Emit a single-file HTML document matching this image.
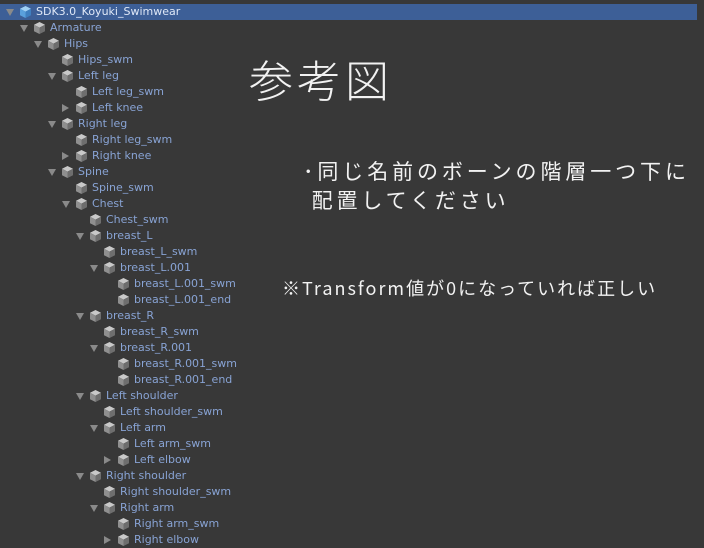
<!DOCTYPE html>
<html><head><meta charset="utf-8"><style>
body{margin:0;width:704px;height:545px;background:#383838;overflow:hidden;position:relative;font-family:"DejaVu Sans","Liberation Sans",sans-serif}
.r{position:absolute;left:0;width:697px;height:16px;font-size:11px;line-height:16px;color:#88a3d4;white-space:nowrap}
.sel{background:#3d5f97;color:#dfe8f7}
.a{position:absolute;top:4px;width:0;height:0}
.o{border-left:4px solid transparent;border-right:4px solid transparent;border-top:7px solid #8a8a8a;top:5px}
.c{border-top:4px solid transparent;border-bottom:4px solid transparent;border-left:7px solid #8a8a8a}
.cube{position:absolute;top:2px;width:11px;height:12px}
.t{position:absolute;top:0}
.j{position:absolute;color:#f2f2f2;font-family:"Noto Sans CJK JP","Liberation Sans",sans-serif;white-space:nowrap}
</style></head><body>
<div id="tree"></div>
<div class="j" style="left:249px;top:46px;font-size:44px;font-weight:300;letter-spacing:4px">参考図</div>
<div class="j" style="left:303px;top:157px;font-size:21px;line-height:29px;letter-spacing:3.9px">･同じ名前のボーンの階層一つ下に<br>&nbsp;配置してください</div>
<div class="j" style="left:282px;top:275px;font-size:18px;letter-spacing:2px">※Transform値が0になっていれば正しい</div>
<script>
var rows=[["SDK3.0_Koyuki_Swimwear",0,"o"],["Armature",1,"o"],["Hips",2,"o"],["Hips_swm",3,""],["Left leg",3,"o"],["Left leg_swm",4,""],["Left knee",4,"c"],["Right leg",3,"o"],["Right leg_swm",4,""],["Right knee",4,"c"],["Spine",3,"o"],["Spine_swm",4,""],["Chest",4,"o"],["Chest_swm",5,""],["breast_L",5,"o"],["breast_L_swm",6,""],["breast_L.001",6,"o"],["breast_L.001_swm",7,""],["breast_L.001_end",7,""],["breast_R",5,"o"],["breast_R_swm",6,""],["breast_R.001",6,"o"],["breast_R.001_swm",7,""],["breast_R.001_end",7,""],["Left shoulder",5,"o"],["Left shoulder_swm",6,""],["Left arm",6,"o"],["Left arm_swm",7,""],["Left elbow",7,"c"],["Right shoulder",5,"o"],["Right shoulder_swm",6,""],["Right arm",6,"o"],["Right arm_swm",7,""],["Right elbow",7,"c"]];
var h="";
rows.forEach(function(r,i){
var x=14*r[1];var top=4+16*i;var s=i==0;
var fc=s?"#9fd0f5":"#c9c9c9",lc=s?"#5aa0dc":"#8f8f8f",rc=s?"#3f7fc0":"#6e6e6e";
h+='<div class="r'+(s?' sel':'')+'" style="top:'+top+'px">';
if(r[2])h+='<div class="a '+r[2]+'" style="left:'+(x+6)+'px"></div>';
h+='<svg class="cube" style="left:'+(x+20)+'px" viewBox="0 0 11 12"><polygon points="5.5,0 11,2.8 5.5,5.6 0,2.8" fill="'+fc+'"/><polygon points="0,2.8 5.5,5.6 5.5,12 0,9.2" fill="'+lc+'"/><polygon points="11,2.8 5.5,5.6 5.5,12 11,9.2" fill="'+rc+'"/></svg>';
h+='<span class="t" style="left:'+(x+36)+'px">'+r[0]+'</span></div>';
});
document.getElementById("tree").innerHTML=h;
</script>
</body></html>
